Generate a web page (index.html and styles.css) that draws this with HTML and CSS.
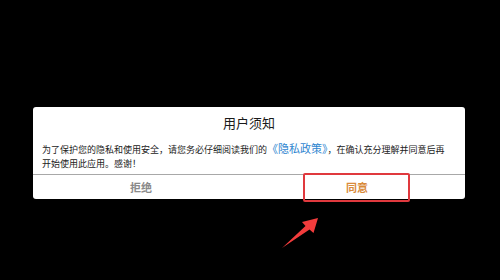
FILE: index.html
```html
<!DOCTYPE html>
<html lang="zh">
<head>
<meta charset="utf-8">
<link rel="stylesheet" href="styles.css">
</head>
<body>
<div class="dialog">
  <div class="title">用户须知</div>
  <div class="content">为了保护您的隐私和使用安全，请您务必仔细阅读我们的<span class="link">《隐私政策》</span>，在确认充分理解并同意后再<br>开始使用此应用。感谢！</div>
  <div class="actions">
    <div class="btn reject">拒绝</div>
    <div class="btn agree">同意<span class="highlight"></span></div>
  </div>
</div>
<svg class="arrow" width="500" height="280" viewBox="0 0 500 280">
  <polygon points="282,248 305.5,226 302,222 318,218 313.5,233 309.5,229.5" fill="#f23c3c"/>
</svg>
</body>
</html>
```
FILE: styles.css
```css
html, body {
  margin: 0;
  padding: 0;
  background: #000;
  width: 500px;
  height: 280px;
  overflow: hidden;
  font-family: "Noto Sans CJK SC", "Noto Sans", sans-serif;
}
body {
  padding-top: 107px;
  padding-left: 33px;
  box-sizing: border-box;
  position: relative;
}
.dialog {
  width: 432px;
  height: 92px;
  background: #fff;
  border-radius: 3px;
  padding-top: 8px;
  box-sizing: border-box;
  display: flex;
  flex-direction: column;
}
.title {
  text-align: center;
  font-size: 13px;
  line-height: 16px;
  color: #1a1a1a;
}
.content {
  margin-top: 10px;
  padding: 0 9px;
  font-size: 9px;
  line-height: 14px;
  color: #222;
  white-space: nowrap;
}
.link {
  font-size: 11px;
  color: #2f86d0;
}
.actions {
  margin-top: 3px;
  border-top: 1px solid #a8a8a8;
  flex: 1;
  display: flex;
}
.btn {
  flex: 1;
  display: flex;
  align-items: center;
  justify-content: center;
  font-size: 11px;
  font-weight: 700;
  position: relative;
}
.reject {
  color: #8a8a8a;
}
.agree {
  color: #d98a3a;
}
.highlight {
  position: absolute;
  left: 54px;
  top: -2px;
  width: 107px;
  height: 29px;
  border: 2px solid #e0393e;
  border-radius: 2px;
  box-sizing: border-box;
}
.arrow {
  position: absolute;
  left: 0;
  top: 0;
}
```
